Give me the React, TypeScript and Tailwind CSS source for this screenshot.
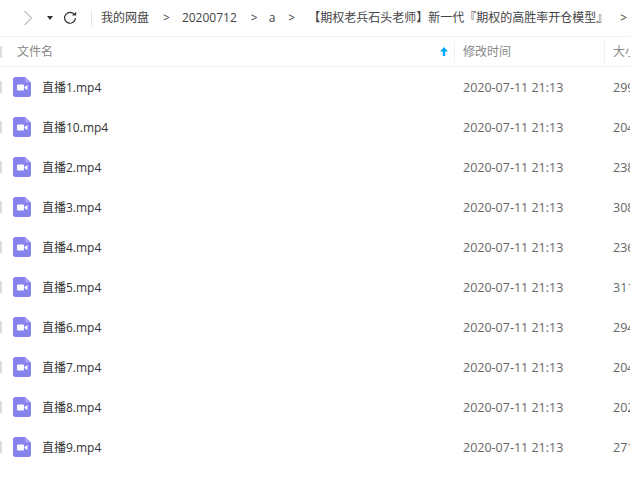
const font = "font-['Open_Sans','Noto_Sans_CJK_SC','Liberation_Sans',sans-serif]";

const rows = [
  ["直播1.mp4", "299"],
  ["直播10.mp4", "204"],
  ["直播2.mp4", "238"],
  ["直播3.mp4", "308"],
  ["直播4.mp4", "236"],
  ["直播5.mp4", "311"],
  ["直播6.mp4", "294"],
  ["直播7.mp4", "204"],
  ["直播8.mp4", "202"],
  ["直播9.mp4", "271"],
];

function VideoIcon() {
  return (
    <svg width="18" height="20" viewBox="0 0 18 20" className="shrink-0">
      <path d="M2.5 0H12L18 5.5V17.5A2.5 2.5 0 0 1 15.5 20H2.5A2.5 2.5 0 0 1 0 17.5V2.5A2.5 2.5 0 0 1 2.5 0Z" fill="#8583ee" />
      <path d="M12 0L18 5.5H14A2 2 0 0 1 12 3.5Z" fill="#a5a3f5" />
      <rect x="4" y="7.5" width="7" height="6" rx="1" fill="#fff" />
      <path d="M11.5 10L14.5 8V13L11.5 11Z" fill="#fff" />
    </svg>
  );
}

export default function App() {
  return (
    <div className={`w-[630px] h-[483px] overflow-hidden bg-white ${font} text-[12px]`}>
      <div className="h-[37px] flex items-center border-b border-[#f1f1f1] text-[#444]">
        <svg width="10" height="16" viewBox="0 0 10 16" className="ml-[23px] shrink-0">
          <path d="M1.5 1L8.5 8L1.5 15" fill="none" stroke="#c4c4c4" strokeWidth="1.3" />
        </svg>
        <svg width="6" height="4" viewBox="0 0 6 4" className="ml-[14px] shrink-0">
          <path d="M0 0H6L3 4Z" fill="#333" />
        </svg>
        <svg width="14" height="14" viewBox="0 0 14 14" className="ml-[10px] shrink-0">
          <path d="M11.6 4A5.4 5.4 0 1 0 12.4 7" fill="none" stroke="#333" strokeWidth="1.2" />
          <path d="M9 4.6H13.2V0.8Z" fill="#333" />
        </svg>
        <div className="ml-[14px] w-px h-[16px] bg-[#e3e3e3] shrink-0" />
        <div className="ml-[9px] flex items-center whitespace-nowrap">
          <span>我的网盘</span>
          <span className="ml-[14px]">&gt;</span>
          <span className="ml-[12px]">20200712</span>
          <span className="ml-[14px]">&gt;</span>
          <span className="ml-[11px]">a</span>
          <span className="ml-[13px]">&gt;</span>
          <span className="ml-[13px]">【期权老兵石头老师】新一代『期权的高胜率开仓模型』</span>
          <span className="ml-[12px]">&gt;</span>
        </div>
      </div>

      <div className="h-[30px] flex items-center border-b border-[#f1f1f1] text-[#888]">
        <div className="w-[2px] h-[12px] bg-[#ddd] shrink-0" />
        <div className="w-[437px] ml-[15px] pr-[6px] shrink-0 flex items-center justify-between">
          <span>文件名</span>
          <svg width="8" height="9" viewBox="0 0 8 9" className="shrink-0">
            <path d="M4 0L8 4.5H5.2V9H2.8V4.5H0Z" fill="#06a7ff" />
          </svg>
        </div>
        <div className="w-px h-[20px] bg-[#eee] shrink-0" />
        <span className="ml-[8px] w-[141px] shrink-0">修改时间</span>
        <div className="w-px h-[20px] bg-[#eee] shrink-0" />
        <span className="ml-[8px] whitespace-nowrap">大小</span>
      </div>

      {rows.map(([name, size]) => (
        <div key={name} className="h-[40px] flex items-center">
          <div className="w-[2px] h-[12px] bg-[#ddd] shrink-0" />
          <div className="ml-[11px]"><VideoIcon /></div>
          <span className="ml-[11px] w-[421px] shrink-0 pt-[2px] text-[#333]">{name}</span>
          <span className="w-[150px] shrink-0 pt-[2px] text-[#666] text-[12.5px] whitespace-nowrap">2020-07-11 21:13</span>
          <span className="pt-[2px] text-[#666] text-[12.5px] whitespace-nowrap">{size}</span>
        </div>
      ))}
    </div>
  );
}
